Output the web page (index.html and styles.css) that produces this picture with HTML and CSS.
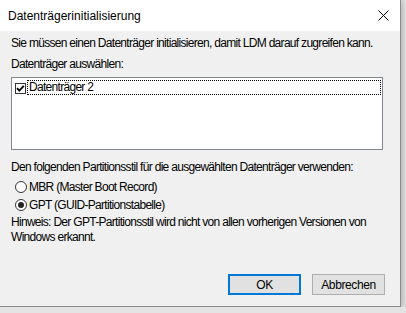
FILE: index.html
```html
<!DOCTYPE html>
<html lang="de">
<head>
    <meta charset="UTF-8">
    <meta name="viewport" content="width=device-width, initial-scale=1.0">
    <title>Datenträgerinitialisierung</title>
    <link rel="stylesheet" href="styles.css">
</head>
<body>
    <div class="window">
        <div class="titlebar">
            <span class="title">Datenträgerinitialisierung</span>
            <svg class="close" width="11" height="11" viewBox="0 0 11 11">
                <path d="M0.5 0.5 L10.5 10.5 M10.5 0.5 L0.5 10.5" stroke="#000" stroke-width="1" fill="none"/>
            </svg>
        </div>
        <div class="content">
            <p class="intro">Sie müssen einen Datenträger initialisieren, damit LDM darauf zugreifen kann.</p>
            <p class="label">Datenträger auswählen:</p>
            <div class="listbox">
                <div class="item">
                    <span class="check">
                        <svg width="9" height="9" viewBox="0 0 9 9">
                            <path d="M1 4.2 L3.3 6.6 L7.8 1.8" stroke="#000" stroke-width="1.8" fill="none"/>
                        </svg>
                    </span>
                    <span class="item-text">Datenträger 2</span>
                </div>
            </div>
            <p class="label style-label">Den folgenden Partitionsstil für die ausgewählten Datenträger verwenden:</p>
            <div class="options">
                <div class="radio"><span class="dot"></span>MBR (Master Boot Record)</div>
                <div class="radio"><span class="dot checked"></span>GPT (GUID-Partitionstabelle)</div>
            </div>
            <p class="hint">Hinweis: Der GPT-Partitionsstil wird nicht von allen vorherigen Versionen von<br>Windows erkannt.</p>
            <div class="buttons">
                <button class="btn default">OK</button>
                <button class="btn">Abbrechen</button>
            </div>
        </div>
    </div>
</body>
</html>
```

FILE: styles.css
```css
body {
    margin: 0;
    background: #e4e4e4;
    font-family: "Liberation Sans", Arial, sans-serif;
    font-size: 12px;
    color: #000;
}
.window {
    width: 400px;
    height: 306px;
    background: #f0f0f0;
    border-right: 1px solid #8a8a8a;
    border-bottom: 1px solid #8a8a8a;
    box-shadow: 1px 1px 7px rgba(0, 0, 0, 0.28);
}
.titlebar {
    height: 31px;
    background: #fff;
    display: flex;
    align-items: center;
    justify-content: space-between;
    padding: 1px 11px 0 8px;
    box-sizing: border-box;
}
.close {
    margin-top: -2px;
}
.content {
    padding: 0 17px 0 11px;
    letter-spacing: -0.7px;
    white-space: nowrap;
}
p {
    margin: 0;
}
.intro {
    margin-top: 5px;
    line-height: 14px;
}
.label {
    margin-top: 7px;
    line-height: 14px;
}
.listbox {
    margin-top: 6px;
    height: 73px;
    box-sizing: border-box;
    background: #fff;
    border: 1px solid #828790;
    padding: 2px 1px 0 3px;
}
.item {
    display: flex;
    align-items: flex-start;
}
.check {
    width: 9px;
    height: 9px;
    margin-top: 3px;
    border: 1px solid #333;
    background: #fff;
    display: flex;
}
.item-text {
    flex: 1;
    margin-left: 1px;
    padding-left: 1px;
    border: 1px dotted #000;
    line-height: 13px;
}
.style-label {
    margin-top: 10px;
}
.options {
    margin-top: 4px;
}
.radio {
    display: flex;
    align-items: center;
    height: 18px;
    padding-left: 4px;
}
.dot {
    width: 10px;
    height: 10px;
    border: 1px solid #333;
    border-radius: 50%;
    background: #fff;
    margin-right: 2px;
    display: flex;
    align-items: center;
    justify-content: center;
}
.dot.checked::after {
    content: "";
    width: 6px;
    height: 6px;
    border-radius: 50%;
    background: #222;
}
.hint {
    margin-top: 1px;
    line-height: 15px;
}
.buttons {
    display: flex;
    justify-content: flex-end;
    gap: 11px;
    margin: 29px -2px 0 0;
}
.btn {
    width: 73px;
    height: 21px;
    box-sizing: border-box;
    background: #e1e1e1;
    border: 1px solid #adadad;
    font-family: inherit;
    font-size: 12px;
    letter-spacing: -0.4px;
    color: #000;
    padding: 0;
}
.btn.default {
    border: 2px solid #0078d7;
}
```
